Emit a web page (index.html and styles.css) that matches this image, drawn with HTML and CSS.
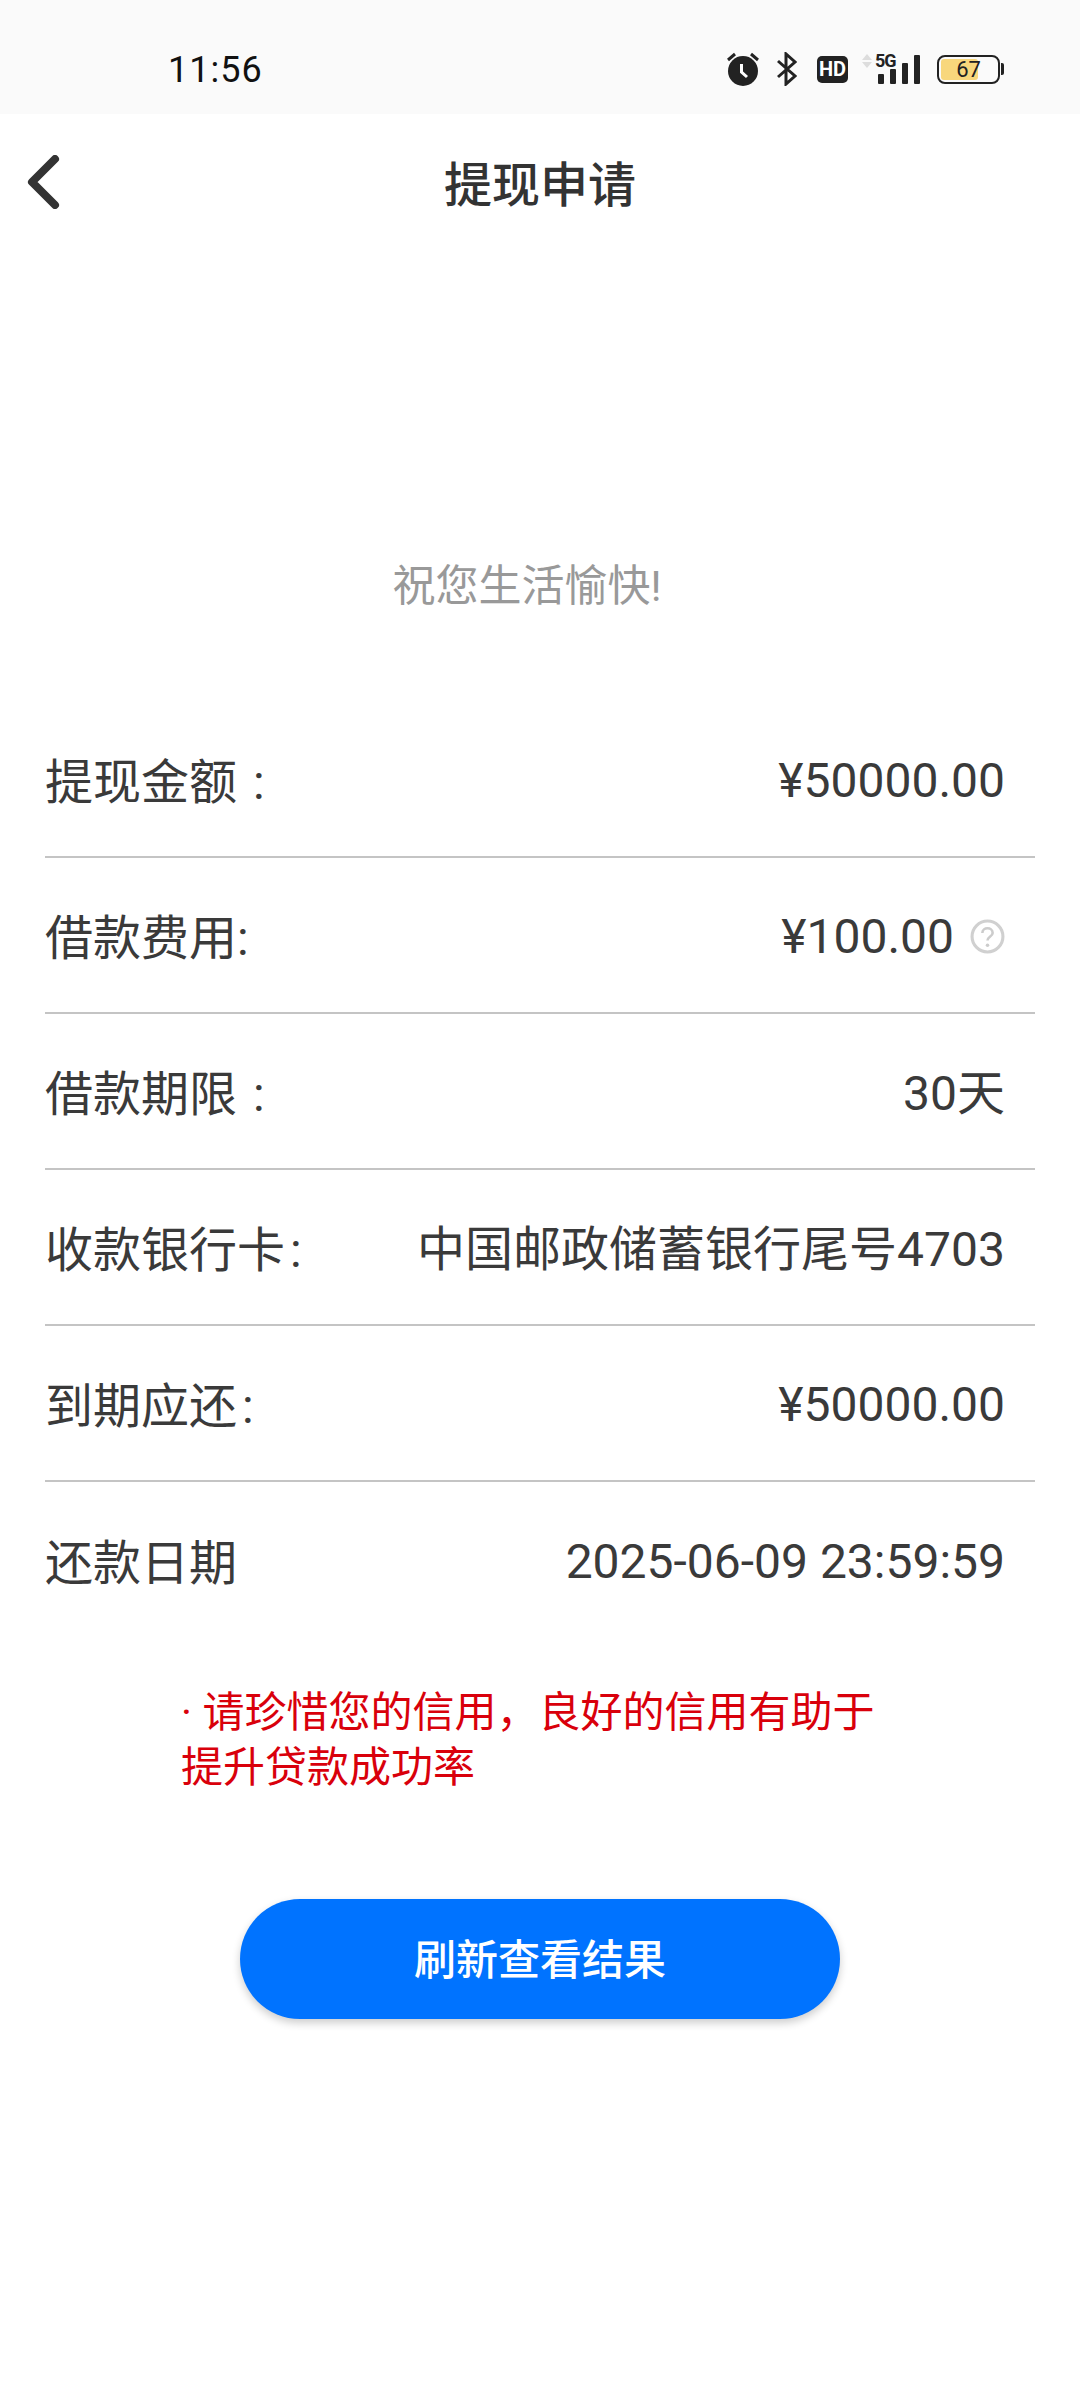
FILE: index.html
```html
<!DOCTYPE html>
<html lang="zh">

<head>
    <meta charset="UTF-8">
    <meta name="viewport" content="width=device-width, initial-scale=1.0">
    <title>提现申请</title>
    <link rel="stylesheet" href="styles.css">
</head>

<body>
    <div class="statusBar">
        <span class="time">11:56</span>
        <div class="statusIcons">
            <svg class="icoAlarm" width="32" height="34" viewBox="0 0 32 34">
                <circle cx="16" cy="19" r="15" fill="#222" />
                <path d="M1 8 L8 2 M31 8 L24 2" stroke="#222" stroke-width="3" />
                <path d="M14.500 12 V20 L20 25" stroke="#fff" stroke-width="3" fill="none" />
            </svg>
            <svg class="icoBt" width="20" height="34" viewBox="0 0 20 34">
                <path d="M1 9 L18 24 L9 32 V2 L18 10 L1 25" stroke="#222" stroke-width="3" fill="none" />
            </svg>
            <span class="hd">HD</span>
            <div class="signal">
                <svg class="arrows" width="10" height="14" viewBox="0 0 10 14">
                    <path d="M5 0 L10 6 H0 Z M5 14 L10 8 H0 Z" fill="#ddd" />
                </svg>
                <span class="fiveG">5G</span>
                <i class="bar1"></i>
                <i class="bar2"></i>
                <i class="bar3"></i>
                <i class="bar4"></i>
            </div>
            <div class="battery">
                <div class="batteryBody">
                    <div class="batteryFill" style="width: 67%"></div>
                    <span class="batteryNum">67</span>
                </div>
                <div class="batteryCap"></div>
            </div>
        </div>
    </div>

    <div class="navBar">
        <svg class="back" width="34" height="54" viewBox="0 0 34 54">
            <path d="M29 4 L6 27 L29 50" stroke="#333" stroke-width="8" stroke-linecap="round" stroke-linejoin="round" fill="none" />
        </svg>
        <div class="navTitle">提现申请</div>
    </div>

    <div class="wish">祝您生活愉快!</div>

    <div class="list">
        <div class="row"><span class="key">提现金额<span class="colonL">:</span></span><span class="val">¥50000.00</span></div>
        <div class="row"><span class="key">借款费用:</span>
            <span class="val">¥100.00
                <svg class="help" width="35" height="35" viewBox="0 0 34 34">
                    <circle cx="17" cy="17" r="15" stroke="#d0d0d0" stroke-width="3" fill="none" />
                    <path d="M12 13.500 C12 7.500 22 7.500 22 13.500 C22 17 17 17 17 21" stroke="#ccc" stroke-width="2.500" fill="none" />
                    <circle cx="17" cy="25.500" r="1.700" fill="#ccc" />
                </svg>
            </span>
        </div>
        <div class="row"><span class="key">借款期限<span class="colonL">:</span></span><span class="val valCn">30天</span></div>
        <div class="row"><span class="key">收款银行卡<span class="colonS">:</span></span><span class="val valCn">中国邮政储蓄银行尾号4703</span></div>
        <div class="row"><span class="key">到期应还<span class="colonS">:</span></span><span class="val">¥50000.00</span></div>
        <div class="row"><span class="key">还款日期</span><span class="val">2025-06-09 23:59:59</span></div>
    </div>

    <p class="tip">· 请珍惜您的信用，良好的信用有助于提升贷款成功率</p>

    <div class="btn">刷新查看结果</div>
</body>

</html>
```

FILE: styles.css
```css
* {
    margin: 0;
    padding: 0;
    box-sizing: border-box;
}

body {
    width: 1080px;
    height: 2400px;
    background-color: #fff;
    font-family: Roboto, "Noto Sans CJK SC", sans-serif;
    color: #3a3a3a;
    overflow: hidden;
}

.statusBar {
    display: flex;
    justify-content: space-between;
    align-items: center;
    height: 114px;
    padding: 24px 76px 0 168px;
    background-color: #fafafa;
}

.time {
    margin-top: 2px;
    font-size: 36px;
    color: #111;
    letter-spacing: 1px;
}

.statusIcons {
    display: flex;
    align-items: center;
}

.icoBt {
    margin-left: 18px;
}

.hd {
    width: 31px;
    height: 27px;
    margin-left: 20px;
    border-radius: 5px;
    background-color: #222;
    color: #fff;
    font-size: 20px;
    font-weight: 700;
    line-height: 27px;
    text-align: center;
}

.signal {
    position: relative;
    display: flex;
    align-items: flex-end;
    gap: 6px;
    width: 59px;
    height: 30px;
    margin-left: 14px;
    padding-left: 16px;
}

.signal i {
    display: block;
    width: 6px;
    border-radius: 1px;
    background-color: #222;
}

.signal .bar1 { height: 10px; }
.signal .bar2 { height: 15px; }
.signal .bar3 { height: 21px; }
.signal .bar4 { height: 29px; }

.arrows {
    position: absolute;
    top: 0;
    left: 0;
}

.fiveG {
    position: absolute;
    top: 0;
    left: 13px;
    font-size: 18px;
    font-weight: 700;
    line-height: 13px;
    color: #222;
    letter-spacing: -1px;
}

.battery {
    display: flex;
    align-items: center;
    margin-left: 16px;
}

.batteryBody {
    position: relative;
    width: 63px;
    height: 29px;
    padding: 2px;
    border: 2px solid #222;
    border-radius: 8px;
}

.batteryFill {
    height: 100%;
    border-radius: 3px;
    background-color: #f8d77c;
}

.batteryNum {
    position: absolute;
    top: 0;
    left: 0;
    width: 100%;
    color: #222;
    font-size: 22px;
    line-height: 25px;
    text-align: center;
}

.batteryCap {
    width: 3px;
    height: 12px;
    margin-left: 1px;
    border-radius: 0 2px 2px 0;
    background-color: #222;
}

.navBar {
    position: relative;
    display: flex;
    align-items: center;
    justify-content: center;
    height: 140px;
    padding-bottom: 6px;
}

.back {
    position: absolute;
    left: 26px;
    top: 41px;
}

.navTitle {
    font-size: 48px;
    font-weight: 500;
    color: #333;
}

.wish {
    margin-top: 302px;
    padding-right: 26px;
    color: #999;
    font-size: 43px;
    line-height: 60px;
    text-align: center;
}

.list {
    margin: 86px 45px 0 45px;
}

.row {
    display: flex;
    justify-content: space-between;
    align-items: center;
    height: 156px;
    padding-right: 30px;
    border-bottom: 2px solid #c4c4c4;
    font-size: 48px;
}

.row:last-child {
    border-bottom: none;
}

.key {
    padding-bottom: 3px;
}

.colonL {
    margin-left: 16px;
}

.colonS {
    margin-left: 5px;
}

.val {
    display: flex;
    align-items: center;
    padding-top: 2px;
}

.valCn {
    padding-top: 0;
    padding-bottom: 4px;
}

.help {
    margin-left: 16px;
}

.tip {
    width: 710px;
    margin: 47px 0 0 181px;
    color: #d9000b;
    font-size: 42px;
    line-height: 55px;
}

.btn {
    width: 600px;
    height: 120px;
    margin: 104px auto 0;
    border-radius: 60px;
    background-color: #0073ff;
    box-shadow: 0 4px 8px rgba(0, 0, 0, 0.2);
    color: #fff;
    font-size: 42px;
    font-weight: 500;
    line-height: 123px;
    text-align: center;
}
```
